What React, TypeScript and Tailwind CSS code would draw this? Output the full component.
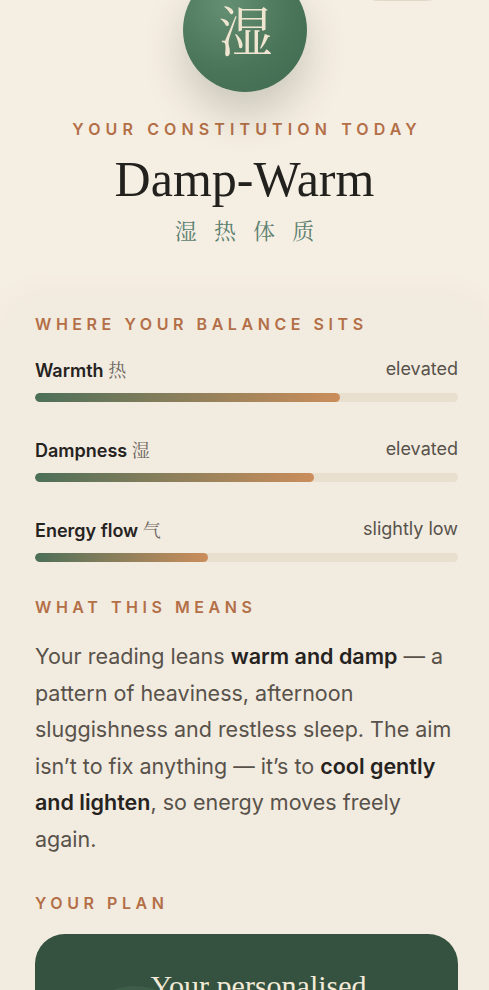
import React from "react";

const sans = { fontFamily: "Inter, 'Noto Sans', 'Noto Sans CJK SC', sans-serif" };
const serif = { fontFamily: "'Liberation Serif', 'DejaVu Serif', serif" };
const cjkSerif = { fontFamily: "'Noto Serif CJK SC', 'Noto Sans CJK SC', serif" };

type Meter = { label: string; zh: string; level: string; pct: number };

const meters: Meter[] = [
  { label: "Warmth", zh: "热", level: "elevated", pct: 72 },
  { label: "Dampness", zh: "湿", level: "elevated", pct: 66 },
  { label: "Energy flow", zh: "气", level: "slightly low", pct: 41 },
];

function Eyebrow({ children, wide }: { children: React.ReactNode; wide?: boolean }) {
  return (
    <div
      className={
        wide
          ? "text-[16px] leading-5 font-semibold tracking-[0.32em] text-[#b36f47] uppercase"
          : "text-[16px] leading-5 font-semibold tracking-[0.285em] text-[#b36f47] uppercase"
      }
    >
      {children}
    </div>
  );
}

function MeterRow({ m }: { m: Meter }) {
  return (
    <div className="flex flex-col gap-[10px]">
      <div className="flex items-center justify-between leading-6">
        <span className="text-[18px] font-semibold text-[#26231f]">
          {m.label}{" "}
          <span className="font-normal text-[#6d675f]" style={cjkSerif}>
            {m.zh}
          </span>
        </span>
        <span className="-mt-[3px] text-[18px] text-[#57524b]">{m.level}</span>
      </div>
      <div className="h-[9px] w-full rounded-full bg-[#e8dfcf] overflow-hidden">
        <div
          className="h-full rounded-full bg-gradient-to-r from-[#4b6f58] to-[#cb8d5b]"
          style={{ width: `${m.pct}%` }}
        />
      </div>
    </div>
  );
}

export default function App() {
  return (
    <div className="min-h-screen w-full bg-[#f5eee2] overflow-hidden" style={sans}>
      {/* hero */}
      <div className="relative -mt-[32px] flex flex-col items-center">
        <div className="absolute right-[44px] -top-[4px] h-[37px] w-[86px] rounded-full border border-[#e2d8c8] bg-[#f7f1e6]" />
        <div className="relative flex h-[124px] w-[124px] items-center justify-center rounded-full bg-[radial-gradient(circle_at_35%_30%,#648f72_0%,#4a7559_55%,#3f6a50_100%)] shadow-[0_22px_40px_rgba(60,70,50,0.22)]">
          <span className="mt-[-2px] ml-[2px] text-[54px] leading-none text-[#efe5d0]" style={cjkSerif}>
            湿
          </span>
        </div>
        <div className="mt-[27px] pl-[0.32em] text-center">
          <Eyebrow wide>Your constitution today</Eyebrow>
        </div>
        <h1 className="mt-[13px] text-[50px] leading-[54px] text-[#22211d]" style={serif}>
          Damp-Warm
        </h1>
        <div
          className="mt-[9px] text-[22px] leading-[30px] tracking-[0.78em] pl-[0.78em] text-[#5c8070]"
          style={cjkSerif}
        >
          湿热体质
        </div>
      </div>

      {/* balance panel */}
      <div className="mt-[50px] rounded-t-[40px] bg-[#f2ebdf] pl-[35px] pr-[31px] pt-[19px] pb-10 shadow-[0_-6px_24px_rgba(150,130,100,0.04)]">
        <Eyebrow>Where your balance sits</Eyebrow>
        <div className="mt-[23px] flex flex-col gap-[35px]">
          {meters.map((m) => (
            <MeterRow key={m.label} m={m} />
          ))}
        </div>

        <div className="mt-[35px]">
          <Eyebrow>What this means</Eyebrow>
        </div>
        <p className="mt-[21px] text-[21.5px] leading-[36.5px] text-[#58524b]">
          Your reading leans <b className="font-semibold text-[#26231f]">warm and damp</b> — a
          pattern of heaviness, afternoon sluggishness and restless sleep. The aim isn’t to fix
          anything — it’s to <b className="font-semibold text-[#26231f]">cool gently and lighten</b>,
          so energy moves freely again.
        </p>

        <div className="mt-[36px]">
          <Eyebrow>Your plan</Eyebrow>
        </div>
        <div className="relative mt-[21px] overflow-hidden rounded-[30px] bg-[#34523f] px-8 pt-[32px] pb-10 pl-[56px] text-center">
          {/* soft decorative disc in the card corner */}
          <div className="absolute left-[40px] top-[52px] h-[120px] w-[120px] rounded-full bg-[#3e5d49]" />
          <div className="relative text-[30px] leading-10 text-[#f3ead8]" style={serif}>
            Your personalised
            <br />
            daily ritual
          </div>
        </div>
      </div>
    </div>
  );
}
